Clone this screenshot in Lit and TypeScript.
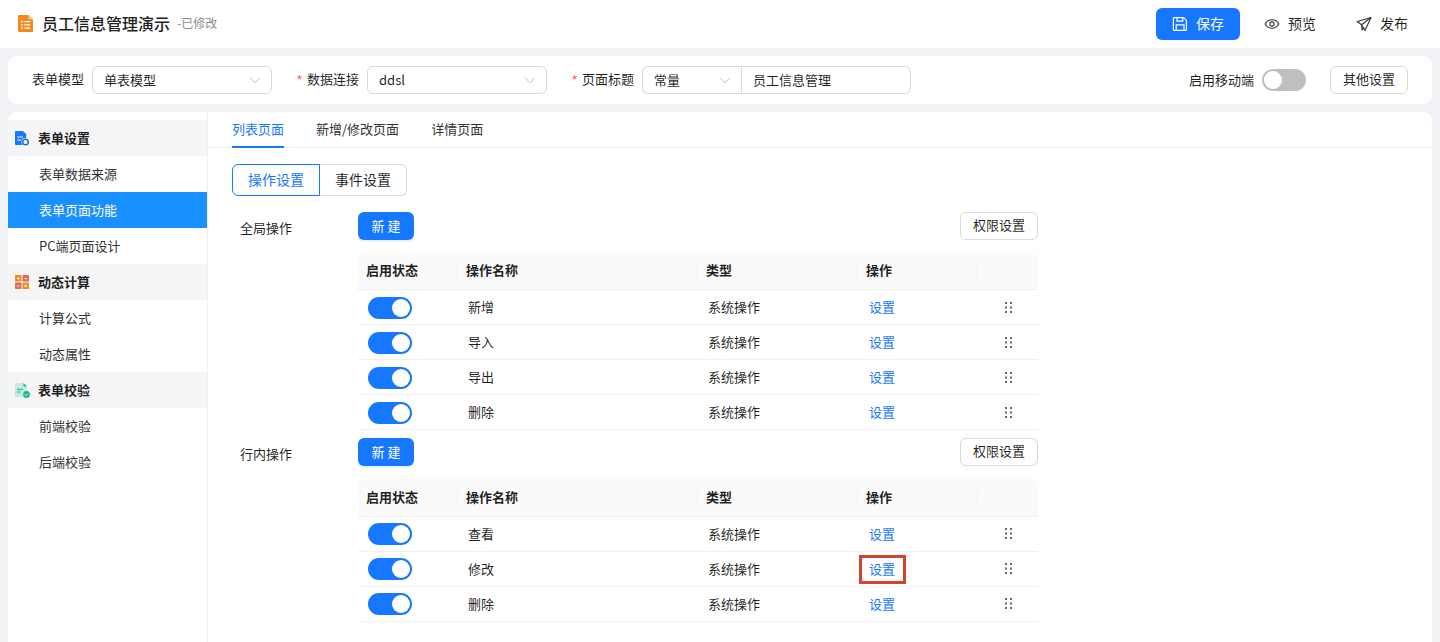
import { LitElement, html, css, svg } from 'lit';
import { customElement } from 'lit/decorators.js';

const chevron = html`<svg class="chevron" viewBox="0 0 12 12" width="12" height="12"><path d="M2 3.500 7 8.800l5-5.300" fill="none" stroke="#bfbfbf" stroke-width="1"/></svg>`;

const fileIcon = html`<svg class="logo" viewBox="0 0 15 17" width="15" height="17"><path d="M1 0h9.500L15 4.500V16a1 1 0 0 1-1 1H1a1 1 0 0 1-1-1V1a1 1 0 0 1 1-1z" fill="#f5891f"/><path d="M10.500 0 15 4.500h-3.500a1 1 0 0 1-1-1z" fill="#fbc48e"/><path d="M3 6h2v1.300H3zM6.200 6h6v1.300h-6zM3 9.200h2v1.300H3zM6.200 9.200h6v1.300h-6zM3 12.400h2v1.300H3zM6.200 12.400h6v1.300h-6z" fill="#fff"/></svg>`;

const saveIcon = html`<svg viewBox="0 0 16 16" width="16" height="16" fill="none" stroke="#fff" stroke-width="1.200"><path d="M2.200 1.600h9.400l2.800 2.800v9.200a.8.8 0 0 1-.8.8H2.200a.8.8 0 0 1-.8-.8V2.400a.8.8 0 0 1 .8-.8z"/><path d="M5 1.800v3.400h5.800V1.800M4.200 14.200V8.800h7.800v5.400"/></svg>`;

const eyeIcon = html`<svg viewBox="0 0 16 16" width="16" height="16" fill="none" stroke="#333" stroke-width="1.100"><path d="M1.200 8C2.800 5.200 5.100 3.800 8 3.800s5.200 1.400 6.800 4.200c-1.600 2.800-3.900 4.200-6.800 4.200S2.800 10.800 1.200 8z"/><circle cx="8" cy="8" r="2.100"/></svg>`;

const sendIcon = html`<svg viewBox="0 0 16 16" width="16" height="16" fill="none" stroke="#333" stroke-width="1.100" stroke-linejoin="round"><path d="M15 1.500 1.200 5.500l4.300 3.200L9 14.500z"/><path d="M15 1.500 5.500 8.700l.6 5.300 2-2.900"/></svg>`;

const sideForm = html`<svg viewBox="0 0 15 15" width="15" height="15"><path d="M1 0h7l3.200 3.200V14H1a1 1 0 0 1-1-1V1a1 1 0 0 1 1-1z" fill="#1677ff"/><path d="M2.200 5.600h5.600v1H2.200zM2.200 8.600h3.800v1H2.200z" fill="#fff"/><circle cx="10.500" cy="11" r="4" fill="#fff"/><circle cx="10.500" cy="11" r="2.800" fill="none" stroke="#1f6fc9" stroke-width="1.500"/></svg>`;

const sideCalc = html`<svg viewBox="0 0 15 14" width="15" height="14"><rect width="6.500" height="6.500" rx=".8" fill="#ee8a1e"/><rect x="7.500" width="6.500" height="6.500" rx=".8" fill="#dd6a5c"/><rect y="7.500" width="6.500" height="6.500" rx=".8" fill="#dd6a5c"/><rect x="7.500" y="7.500" width="6.500" height="6.500" rx=".8" fill="#ee8a1e"/><path d="M1.800 2.900h3v.8h-3zM2.900 1.800h.8v3h-.8zM9.200 2.900h3v.8h-3zM1.800 10.400h3v.8h-3zM9.200 9.700h3v.7h-3zM9.200 11h3v.7h-3z" fill="#fff"/></svg>`;

const sideCheck = html`<svg viewBox="0 0 15 15" width="15" height="15"><path d="M0 0h8.500L12 3.500V14H0z" fill="#c4ebe1"/><path d="M8.500 0 12 3.500H8.500z" fill="#19b394"/><path d="M2 5.800h6v1H2zM2 8.500h3.500v1H2z" fill="#19a98b"/><circle cx="11.500" cy="11.500" r="3.400" fill="#19b394"/><path d="M9.800 11.300l1.300 1.300 2.100-2.100" fill="none" stroke="#fff" stroke-width=".9"/></svg>`;

const dragDots = html`<svg viewBox="0 0 8 11" width="8" height="11">${[0, 4.5, 9].map(y => [0, 5].map(x => svg`<rect x=${x} y=${y} width="2" height="2" fill="#666"/>`))}</svg>`;

const menu = [
  { title: '表单设置', icon: sideForm, items: ['表单数据来源', '表单页面功能', 'PC端页面设计'] },
  { title: '动态计算', icon: sideCalc, items: ['计算公式', '动态属性'] },
  { title: '表单校验', icon: sideCheck, items: ['前端校验', '后端校验'] },
];

const sections = [
  { label: '全局操作', rows: ['新增', '导入', '导出', '删除'], marked: '' },
  { label: '行内操作', rows: ['查看', '修改', '删除'], marked: '修改' },
];

@customElement('app-root')
export class AppRoot extends LitElement {
  static styles = css`
    :host {
      display: flex;
      flex-direction: column;
      height: 100vh;
      overflow: hidden;
      background: #f0f2f5;
      color: rgba(0, 0, 0, 0.88);
      font: 13px/20px 'Noto Sans CJK SC', 'Noto Sans', sans-serif;
    }
    .header {
      height: 48px;
      flex: none;
      display: flex;
      align-items: center;
      background: #fff;
      padding: 0 16px 0 18px;
    }
    .logo {
      margin-top: -1px;
    }
    .title {
      font-size: 16px;
      font-weight: 500;
      margin-left: 9px;
      padding-bottom: 2px;
      color: #1f1f1f;
    }
    .sub {
      font-size: 12px;
      color: #8c8c8c;
      margin-left: 7px;
      padding-bottom: 2px;
    }
    .actions {
      margin-left: auto;
      display: flex;
      gap: 8px;
    }
    .act {
      width: 84px;
      height: 32px;
      box-sizing: border-box;
      padding: 0 0 2px 16px;
      display: flex;
      align-items: center;
      gap: 8px;
      font-size: 14px;
      border-radius: 6px;
    }
    .act svg {
      margin-top: 1px;
    }
    .act.primary {
      background: #1677ff;
      color: #fff;
    }
    .toolbar {
      flex: none;
      height: 48px;
      margin: 8px 8px 0;
      padding: 0 24px;
      background: #fff;
      border-radius: 8px;
      display: flex;
      align-items: center;
    }
    .field {
      display: flex;
      align-items: center;
      margin-right: 25px;
    }
    .req {
      color: #ff4d4f;
      width: 10px;
      font-family: 'Liberation Sans', sans-serif;
    }
    .flabel {
      margin-right: 8px;
      padding-bottom: 2px;
    }
    .select {
      width: 180px;
      height: 28px;
      box-sizing: border-box;
      border: 1px solid #d9d9d9;
      border-radius: 6px;
      padding: 0 11px;
      display: flex;
      align-items: center;
      justify-content: space-between;
    }
    .select.left {
      width: 99px;
      border-radius: 6px 0 0 6px;
      border-right: 0;
    }
    .select.right {
      width: 170px;
      border-radius: 0 6px 6px 0;
      justify-content: flex-start;
    }
    .mobile {
      margin-left: auto;
      display: flex;
      align-items: center;
      gap: 8px;
    }
    .btn {
      height: 28px;
      box-sizing: border-box;
      border: 1px solid #d9d9d9;
      border-radius: 6px;
      padding: 0 12px 2px;
      display: flex;
      align-items: center;
      background: #fff;
    }
    .mobile .btn {
      margin-left: 16px;
    }
    .switch {
      width: 44px;
      height: 22px;
      border-radius: 11px;
      background: #bfbfbf;
      display: flex;
      align-items: center;
      padding: 0 2px;
      box-sizing: border-box;
    }
    .switch i {
      width: 18px;
      height: 18px;
      border-radius: 50%;
      background: #fff;
    }
    .switch.on {
      background: #1677ff;
      justify-content: flex-end;
      margin-top: 1.3px;
    }
    .body {
      flex: 1;
      min-height: 0;
      margin: 8px 8px 0;
      background: #fff;
      border-radius: 8px 8px 0 0;
      display: flex;
      overflow: hidden;
    }
    .side {
      width: 200px;
      flex: none;
      box-sizing: border-box;
      padding-top: 8px;
      border-right: 1px solid #f0f0f0;
    }
    .ghead {
      height: 36px;
      display: flex;
      align-items: center;
      gap: 8px;
      padding-left: 7px;
      background: #f5f5f5;
      font-weight: 700;
    }
    .gitem {
      height: 36px;
      display: flex;
      align-items: center;
      padding-left: 31px;
      color: #333;
    }
    .gitem.active {
      background: #1890ff;
      color: #fff;
    }
    .main {
      flex: 1;
      min-width: 0;
    }
    .tabs {
      height: 36px;
      box-sizing: border-box;
      padding: 0 24px;
      display: flex;
      gap: 32px;
      border-bottom: 1px solid #f0f0f0;
    }
    .tab {
      height: 36px;
      box-sizing: border-box;
      display: flex;
      align-items: center;
      padding-bottom: 2px;
      color: #333;
    }
    .tab.active {
      color: #1677ff;
      border-bottom: 2px solid #1677ff;
      padding-bottom: 0;
    }
    .content {
      width: 806px;
      padding: 16px 0 0 24px;
    }
    .radios {
      display: flex;
      width: 175px;
      margin-bottom: 16px;
      font-size: 14px;
    }
    .radio {
      height: 32px;
      box-sizing: border-box;
      display: flex;
      align-items: center;
      justify-content: center;
      border: 1px solid #d9d9d9;
      border-left: 0;
      border-radius: 0 6px 6px 0;
      flex: 1;
      padding-bottom: 2px;
    }
    .radio.active {
      flex: none;
      width: 88px;
      border: 1px solid #1677ff;
      border-radius: 6px 0 0 6px;
      color: #1677ff;
    }
    .section {
      display: grid;
      grid-template-columns: 126px 680px;
      margin-bottom: 8px;
    }
    .slabel {
      padding: 6px 0 0 8px;
    }
    .bar {
      display: flex;
      justify-content: space-between;
      margin-bottom: 13px;
    }
    .new {
      width: 56px;
      height: 28px;
      box-sizing: border-box;
      padding-bottom: 1px;
      border-radius: 6px;
      background: #1677ff;
      color: #fff;
      display: flex;
      align-items: center;
      justify-content: center;
      box-shadow: 0 2px 0 rgba(5, 145, 255, 0.1);
    }
    .row {
      display: grid;
      grid-template-columns: 100px 240px 160px 120px 60px;
      height: 35px;
      box-sizing: border-box;
      padding-bottom: 0.3px;
      border-bottom: 1px solid #f0f0f0;
      align-items: center;
    }
    .row > div {
      padding-left: 10px;
    }
    .row.head {
      height: 37.4px;
      padding-bottom: 0;
      background: #fafafa;
      border-radius: 8px 8px 0 0;
      font-weight: 700;
    }
    .row.head > div {
      padding-left: 8px;
      height: 18px;
      line-height: 16px;
      border-right: 1px solid #f0f0f0;
      box-sizing: border-box;
    }
    .row.head > div:last-child {
      border-right: 0;
    }
    .link {
      color: #1677ff;
      position: relative;
      display: inline-block;
      margin-left: 1px;
    }
    .mark {
      position: absolute;
      left: -10px;
      right: -11px;
      top: -4px;
      bottom: -5px;
      border: 3px solid #d0452c;
    }
    .drag {
      display: flex;
      justify-content: center;
      padding-left: 2px !important;
    }
    .drag svg {
      display: block;
    }
  `;

  private renderSection(s: { label: string; rows: string[]; marked: string }) {
    return html`
      <div class="section">
        <div class="slabel">${s.label}</div>
        <div>
          <div class="bar">
            <div class="new">新 建</div>
            <div class="btn">权限设置</div>
          </div>
          <div class="row head">
            <div>启用状态</div><div>操作名称</div><div>类型</div><div>操作</div><div></div>
          </div>
          ${s.rows.map(r => html`
            <div class="row">
              <div><div class="switch on"><i></i></div></div>
              <div>${r}</div>
              <div>系统操作</div>
              <div><span class="link">设置${r === s.marked ? html`<span class="mark"></span>` : ''}</span></div>
              <div class="drag">${dragDots}</div>
            </div>
          `)}
        </div>
      </div>
    `;
  }

  render() {
    return html`
      <div class="header">
        ${fileIcon}
        <span class="title">员工信息管理演示</span>
        <span class="sub">-已修改</span>
        <div class="actions">
          <div class="act primary">${saveIcon}保存</div>
          <div class="act">${eyeIcon}预览</div>
          <div class="act">${sendIcon}发布</div>
        </div>
      </div>
      <div class="toolbar">
        <div class="field">
          <span class="flabel">表单模型</span>
          <div class="select">单表模型${chevron}</div>
        </div>
        <div class="field">
          <span class="req">*</span><span class="flabel">数据连接</span>
          <div class="select">ddsl${chevron}</div>
        </div>
        <div class="field">
          <span class="req">*</span><span class="flabel">页面标题</span>
          <div class="select left">常量${chevron}</div>
          <div class="select right">员工信息管理</div>
        </div>
        <div class="mobile">
          启用移动端
          <div class="switch"><i></i></div>
          <div class="btn">其他设置</div>
        </div>
      </div>
      <div class="body">
        <div class="side">
          ${menu.map(g => html`
            <div class="ghead">${g.icon}${g.title}</div>
            ${g.items.map(i => html`<div class="gitem ${i === '表单页面功能' ? 'active' : ''}">${i}</div>`)}
          `)}
        </div>
        <div class="main">
          <div class="tabs">
            <div class="tab active">列表页面</div>
            <div class="tab">新增/修改页面</div>
            <div class="tab">详情页面</div>
          </div>
          <div class="content">
            <div class="radios">
              <div class="radio active">操作设置</div>
              <div class="radio">事件设置</div>
            </div>
            ${sections.map(s => this.renderSection(s))}
          </div>
        </div>
      </div>
    `;
  }
}
